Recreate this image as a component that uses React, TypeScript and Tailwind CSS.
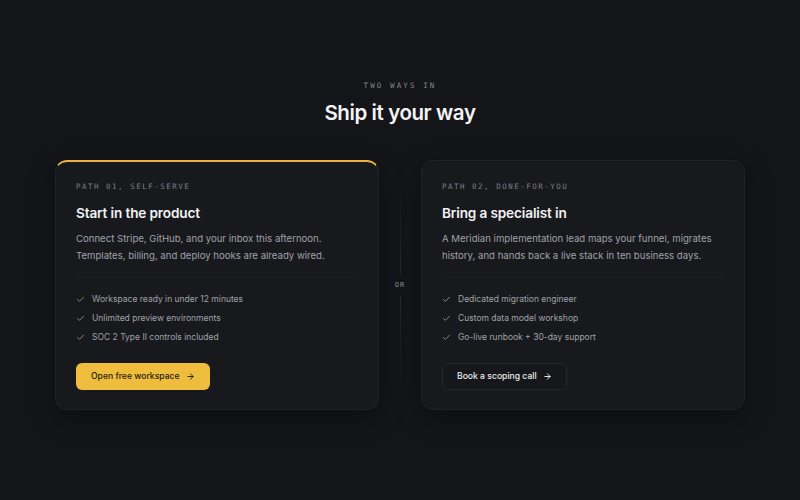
import React from "react";

const mono = { fontFamily: '"DejaVu Sans Mono", "Liberation Mono", monospace' };
const sans = { fontFamily: 'Inter, "Noto Sans", sans-serif' };

function Check() {
  return (
    <svg width="9" height="9" viewBox="0 0 24 24" fill="none" stroke="#8b8d94" strokeWidth="2.5" strokeLinecap="round" strokeLinejoin="round">
      <path d="M20 6 9 17l-5-5" />
    </svg>
  );
}

function Arrow({ color }: { color: string }) {
  return (
    <svg width="9" height="9" viewBox="0 0 24 24" fill="none" stroke={color} strokeWidth="2.6" strokeLinecap="round" strokeLinejoin="round">
      <path d="M5 12h14" />
      <path d="m12 5 7 7-7 7" />
    </svg>
  );
}

type Path = {
  label: string;
  title: string;
  body: string[];
  items: string[];
  cta: string;
  primary: boolean;
};

const paths: Path[] = [
  {
    label: "PATH 01, SELF-SERVE",
    title: "Start in the product",
    body: [
      "Connect Stripe, GitHub, and your inbox this afternoon.",
      "Templates, billing, and deploy hooks are already wired.",
    ],
    items: [
      "Workspace ready in under 12 minutes",
      "Unlimited preview environments",
      "SOC 2 Type II controls included",
    ],
    cta: "Open free workspace",
    primary: true,
  },
  {
    label: "PATH 02, DONE-FOR-YOU",
    title: "Bring a specialist in",
    body: [
      "A Meridian implementation lead maps your funnel, migrates",
      "history, and hands back a live stack in ten business days.",
    ],
    items: [
      "Dedicated migration engineer",
      "Custom data model workshop",
      "Go-live runbook + 30-day support",
    ],
    cta: "Book a scoping call",
    primary: false,
  },
];

function Card({ p }: { p: Path }) {
  return (
    <div
      className={
        "w-[324px] h-[250px] rounded-[12px] bg-[#18191d] border border-[#212228] shadow-[0_8px_24px_rgba(0,0,0,0.35)] px-[20px] flex flex-col " +
        (p.primary ? "border-t-2 border-t-[#e9b43c] pt-[19px]" : "pt-[20px]")
      }
    >
      <div className="text-[7.5px] tracking-[0.2em] text-[#7d7f86] leading-[12px] whitespace-nowrap" style={mono}>
        {p.label}
      </div>
      <div className="mt-[10px] text-[13.6px] font-semibold text-[#f2f2f4] leading-[20px] tracking-[-0.01em]">
        {p.title}
      </div>
      <div className="mt-[7px] text-[9.6px] leading-[17px] text-[#a0a2a9] whitespace-nowrap">
        {p.body.map((l) => (
          <div key={l}>{l}</div>
        ))}
      </div>
      <div className="mt-[13px] h-px bg-[#1f2025]" />
      <ul className="mt-[14px] flex flex-col gap-[5px]">
        {p.items.map((it) => (
          <li key={it} className="flex items-center gap-[7px] text-[8.5px] leading-[14px] text-[#a0a2a9]">
            <Check />
            <span>{it}</span>
          </li>
        ))}
      </ul>
      <div className="mt-[19px]">
        {p.primary ? (
          <button className="h-[27px] px-[15px] rounded-[6px] bg-[#eebd3e] text-[#2a2108] text-[8.6px] font-medium flex items-center gap-[6px]">
            {p.cta}
            <Arrow color="#2a2108" />
          </button>
        ) : (
          <button className="h-[27px] px-[14px] rounded-[6px] bg-[#16171b] border border-[#26272d] text-[#ececef] text-[8.6px] font-medium flex items-center gap-[6px]">
            {p.cta}
            <Arrow color="#ececef" />
          </button>
        )}
      </div>
    </div>
  );
}

export default function App() {
  return (
    <div className="w-[800px] h-[500px] bg-[#141518] flex flex-col items-center pt-[81px]" style={sans}>
      <div className="text-[7.5px] tracking-[0.28em] text-[#85878d] leading-[10px]" style={mono}>
        TWO WAYS IN
      </div>
      <h1 className="mt-[8px] text-[20.5px] font-semibold text-[#f4f4f6] leading-[28px] tracking-[-0.02em]">
        Ship it your way
      </h1>
      <div className="mt-[33px] flex items-stretch">
        <Card p={paths[0]} />
        <div className="w-[42px] flex flex-col items-center justify-center py-[20px]">
          <div className="flex-1 w-px bg-gradient-to-b from-transparent to-[#26272c]" />
          <div className="py-[6px] text-[7px] tracking-[0.15em] text-[#8a8c92]" style={mono}>
            OR
          </div>
          <div className="flex-1 w-px bg-gradient-to-b from-[#26272c] to-transparent" />
        </div>
        <Card p={paths[1]} />
      </div>
    </div>
  );
}
